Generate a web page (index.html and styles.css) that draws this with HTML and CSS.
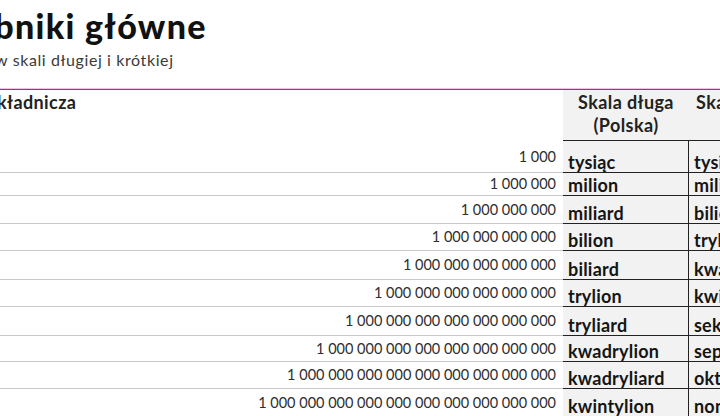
FILE: index.html
```html
<!DOCTYPE html>
<html lang="pl">
<head>
<meta charset="utf-8">
<title>Liczebniki główne</title>
<link rel="stylesheet" href="styles.css">
</head>
<body>
<div class="page">
  <header class="head">
    <h1 class="title">Liczebniki główne</h1>
    <p class="subtitle">Nazwy liczb w skali długiej i krótkiej</p>
  </header>
  <div class="rule"></div>
  <table class="nums">
    <colgroup>
      <col class="c-num">
      <col class="c-long">
      <col class="c-short">
    </colgroup>
    <thead>
      <tr>
        <th class="h-num">Postać wykładnicza</th>
        <th class="h-word">Skala długa<br>(Polska)</th>
        <th class="h-word">Skala krótka<br>(USA)</th>
      </tr>
    </thead>
    <tbody>
      <tr><td class="num">1&nbsp;000</td><td class="w long">tysiąc</td><td class="w">tysiąc</td></tr>
      <tr><td class="num">1&nbsp;000&nbsp;000</td><td class="w long">milion</td><td class="w">milion</td></tr>
      <tr><td class="num">1&nbsp;000&nbsp;000&nbsp;000</td><td class="w long">miliard</td><td class="w">bilion</td></tr>
      <tr><td class="num">1&nbsp;000&nbsp;000&nbsp;000&nbsp;000</td><td class="w long">bilion</td><td class="w">trylion</td></tr>
      <tr><td class="num">1&nbsp;000&nbsp;000&nbsp;000&nbsp;000&nbsp;000</td><td class="w long">biliard</td><td class="w">kwadrylion</td></tr>
      <tr><td class="num">1&nbsp;000&nbsp;000&nbsp;000&nbsp;000&nbsp;000&nbsp;000</td><td class="w long">trylion</td><td class="w">kwintylion</td></tr>
      <tr><td class="num">1&nbsp;000&nbsp;000&nbsp;000&nbsp;000&nbsp;000&nbsp;000&nbsp;000</td><td class="w long">tryliard</td><td class="w">sekstylion</td></tr>
      <tr><td class="num">1&nbsp;000&nbsp;000&nbsp;000&nbsp;000&nbsp;000&nbsp;000&nbsp;000&nbsp;000</td><td class="w long">kwadrylion</td><td class="w">septylion</td></tr>
      <tr><td class="num">1&nbsp;000&nbsp;000&nbsp;000&nbsp;000&nbsp;000&nbsp;000&nbsp;000&nbsp;000&nbsp;000</td><td class="w long">kwadryliard</td><td class="w">oktylion</td></tr>
      <tr><td class="num">1&nbsp;000&nbsp;000&nbsp;000&nbsp;000&nbsp;000&nbsp;000&nbsp;000&nbsp;000&nbsp;000&nbsp;000</td><td class="w long">kwintylion</td><td class="w">nonilion</td></tr>
    </tbody>
  </table>
</div>
</body>
</html>
```

FILE: styles.css
```css
html, body {
  margin: 0;
  padding: 0;
  background: #ffffff;
}

body {
  width: 720px;
  height: 416px;
  overflow: hidden;
  font-family: Lato, "Noto Sans", sans-serif;
  color: #1b1b1b;
}

.page {
  width: 720px;
}

.head {
  padding-top: 6px;
  padding-bottom: 18px;
}

.title {
  margin: 0 0 0 -89px;
  font-size: 34px;
  line-height: 40px;
  font-weight: 900;
  letter-spacing: 1.3px;
  color: #111111;
  white-space: nowrap;
}

.subtitle {
  margin: 4px 0 0 -99px;
  font-size: 16px;
  line-height: 20px;
  font-weight: 400;
  letter-spacing: 0.6px;
  color: #3a3a3a;
  white-space: nowrap;
}

.rule {
  height: 1px;
  background: #f3c1dd;
  border-bottom: 1px solid #a8327a;
}

.nums {
  margin-left: -100px;
  border-collapse: separate;
  border-spacing: 0;
  table-layout: fixed;
  width: 906px;
}

.c-num { width: 663px; }
.c-long { width: 126px; }
.c-short { width: 117px; }

.nums th {
  padding: 1px 0 0 0;
  font-size: 18px;
  line-height: 23px;
  font-weight: 700;
  letter-spacing: 0.4px;
  color: #222222;
  vertical-align: top;
  white-space: nowrap;
}

.nums thead tr { height: 51px; }

.nums .h-num {
  text-align: left;
  padding-left: 12px;
  background: #ffffff;
}

.nums .h-word {
  text-align: center;
  background: #f2f2f2;
  border-bottom: 1px solid #222222;
}

.nums td {
  padding: 0;
  white-space: nowrap;
}

.nums .num {
  text-align: right;
  padding-right: 7px;
  font-size: 14.5px;
  line-height: 18px;
  font-weight: 400;
  color: #2e2e2e;
  vertical-align: middle;
  border-bottom: 1px solid #c9c9c9;
}

.nums .w {
  padding: 0 0 0 5px;
  font-size: 18px;
  line-height: 20px;
  font-weight: 700;
  letter-spacing: 0.2px;
  color: #151515;
  vertical-align: bottom;
  background: #f2f2f2;
  border-bottom: 1px solid #222222;
}

.nums .long {
  border-right: 1px solid #222222;
}

.nums tbody tr:nth-child(1) { height: 32px; }
.nums tbody tr:nth-child(2) { height: 23px; }
.nums tbody tr:nth-child(3) { height: 28px; }
.nums tbody tr:nth-child(4) { height: 27px; }
.nums tbody tr:nth-child(5) { height: 29px; }
.nums tbody tr:nth-child(6) { height: 27px; }
.nums tbody tr:nth-child(7) { height: 29px; }
.nums tbody tr:nth-child(8) { height: 26px; }
.nums tbody tr:nth-child(9) { height: 27px; }
.nums tbody tr:nth-child(10) { height: 28px; }
```
